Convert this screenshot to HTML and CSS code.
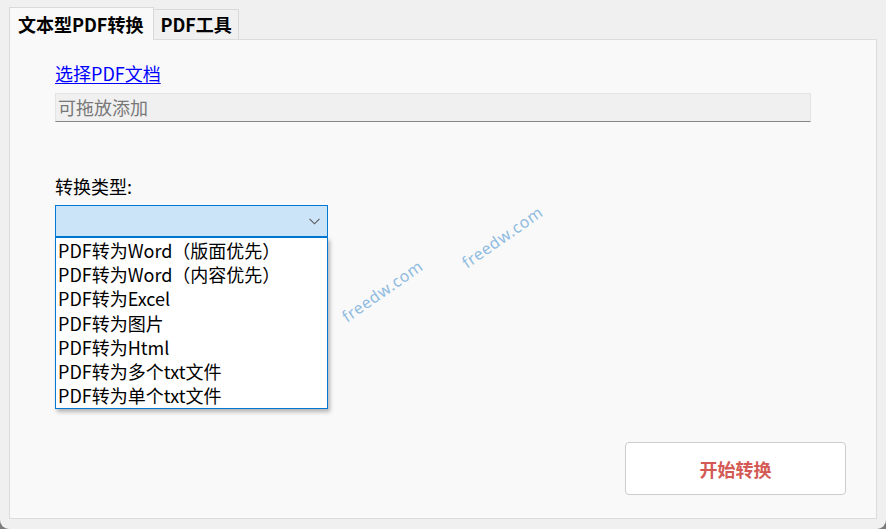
FILE: index.html
```html
<!DOCTYPE html>
<html lang="zh-CN">
<head>
<meta charset="utf-8">
<title>PDF转换</title>
<link rel="stylesheet" href="styles.css">
</head>
<body>
<div class="window">
  <div class="tabs">
    <div class="tab active">文本型PDF转换</div>
    <div class="tab">PDF工具</div>
  </div>
  <div class="panel">
    <a class="link" href="#">选择PDF文档</a>
    <div class="drop">可拖放添加</div>
    <div class="label">转换类型:</div>
    <div class="combo-wrap">
      <div class="combo">
        <svg class="chev" width="11" height="7" viewBox="0 0 11 7"><path d="M0.5 0.8 L5.5 5.8 L10.5 0.8" fill="none" stroke="#5a5a5a" stroke-width="1.1"/></svg>
      </div>
      <ul class="list">
        <li>PDF转为Word（版面优先）</li>
        <li>PDF转为Word（内容优先）</li>
        <li>PDF转为Excel</li>
        <li>PDF转为图片</li>
        <li>PDF转为Html</li>
        <li>PDF转为多个txt文件</li>
        <li>PDF转为单个txt文件</li>
      </ul>
    </div>
    <button class="start">开始转换</button>
    <span class="wm wm1">freedw.com</span>
    <span class="wm wm2">freedw.com</span>
  </div>
</div>
</body>
</html>
```
FILE: styles.css
```css
html {
  background: #7c7c7c;
  height: 100%;
}
body {
  margin: 0;
  height: 100%;
  font-family: "Noto Sans CJK SC", "Noto Sans", sans-serif;
  font-size: 18px;
}
.window {
  height: 529px;
  background: #f0f0f0;
  border-radius: 0 0 9px 9px;
  overflow: hidden;
}
.tabs {
  display: flex;
  align-items: flex-end;
  height: 39px;
  padding-left: 9px;
}
.tab {
  height: 29px;
  padding: 0 6px 0 6px;
  border: 1px solid #d9d9d9;
  border-bottom: none;
  background: #f0f0f0;
  font-weight: bold;
  line-height: 29px;
  color: #000;
  box-sizing: content-box;
}
.tab.active {
  height: 32px;
  line-height: 33px;
  padding: 0 10px 0 8px;
  background: #f9f9f9;
  position: relative;
  z-index: 1;
  margin-bottom: -1px;
}
.tab + .tab {
  border-left: none;
  width: 72px;
}
.panel {
  position: relative;
  margin: 0 9px;
  height: 478px;
  background: #f9f9f9;
  border: 1px solid #dcdcdc;
  display: flex;
  flex-direction: column;
  align-items: flex-start;
  padding-left: 45px;
}
.link {
  margin-top: 21px;
  line-height: 24px;
  color: #0000ff;
  text-decoration: underline;
  text-underline-offset: 2px;
}
.drop {
  margin-top: 8px;
  width: 752px;
  height: 27px;
  background: #f0f0f0;
  border: 1px solid #e3e3e3;
  border-bottom: 1px solid #858585;
  color: #787878;
  line-height: 26px;
  padding-left: 2px;
}
.label {
  margin-top: 52px;
  line-height: 24px;
  color: #000;
}
.combo-wrap {
  position: relative;
  margin-top: 7px;
}
.combo {
  width: 271px;
  height: 30px;
  background: #cce4f7;
  border: 1px solid #0078d4;
  position: relative;
}
.chev {
  position: absolute;
  right: 7px;
  top: 12px;
}
.list {
  position: absolute;
  left: 0;
  top: 32px;
  margin: 0;
  padding: 0 0 1px 0;
  list-style: none;
  width: 271px;
  background: #fff;
  border: 1px solid #0078d4;
  box-shadow: 2px 3px 4px rgba(0, 0, 0, 0.28);
  z-index: 2;
}
.list li {
  height: 24.2px;
  line-height: 24px;
  padding-left: 2px;
  font-size: 18px;
  color: #000;
  white-space: nowrap;
}
.start {
  margin-top: auto;
  margin-bottom: 23px;
  align-self: flex-end;
  margin-right: 30px;
  width: 221px;
  height: 53px;
  background: #fff;
  border: 1px solid #cccccc;
  border-radius: 4px;
  font-family: "Noto Sans CJK SC", sans-serif;
  font-size: 18px;
  font-weight: bold;
  color: #d35a55;
  padding: 0;
}
.wm {
  position: absolute;
  font-family: "Noto Sans", sans-serif;
  font-size: 16px;
  letter-spacing: 0.6px;
  color: #8fbbe0;
  transform: rotate(-35deg);
  transform-origin: center;
  white-space: nowrap;
}
.wm1 {
  left: 325px;
  top: 240px;
}
.wm2 {
  left: 445px;
  top: 186px;
}
```
